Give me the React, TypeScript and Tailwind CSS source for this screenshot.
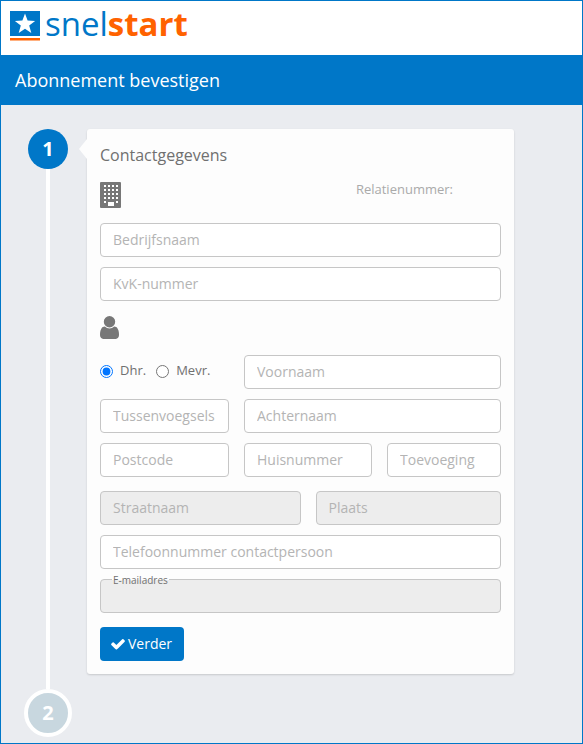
import type { InputHTMLAttributes } from "react";

type FieldProps = InputHTMLAttributes<HTMLInputElement> & { label: string };

function Field({ label, ...rest }: FieldProps) {
  return (
    <input
      type="text"
      aria-label={label}
      placeholder={label}
      className="block h-[34px] w-full min-w-0 rounded-[4px] border border-[#c6c6c6] bg-white px-3 pb-[2px] text-sm text-[#555] placeholder:text-[#b4b4b4] disabled:bg-[#ededed]"
      {...rest}
    />
  );
}

function Logo() {
  return (
    <a href="#" aria-label="snelstart" className="flex items-start gap-[5px]">
      <svg className="mt-[10px] h-[30px] w-[30px]" viewBox="0 0 30 30" aria-hidden="true">
        <rect width="30" height="25" fill="#0077c8" />
        <rect y="27" width="30" height="2.5" fill="#ff6200" />
        <path
          fill="#fff"
          d="M15 2.6l2.6 7 7.5.3-5.9 4.7 2.1 7.4-6.3-4.2L8.700 22l2.100-7.400L4.900 9.900l7.500-.3z"
        />
      </svg>
      <span className="text-[33px] leading-[46px] text-[#0077c8]">
        snel<span className="font-bold text-[#ff6200]">start</span>
      </span>
    </a>
  );
}

function BuildingIcon() {
  const columns = [4, 8, 12, 16];
  const rows = [3, 7, 11, 15];
  return (
    <svg className="h-[26px] w-[21px]" viewBox="0 0 21 26" aria-hidden="true">
      <rect width="21" height="26" rx="1" fill="#777" />
      <g fill="#fff">
        {rows.map((y) => columns.map((x) => <rect key={`${x}-${y}`} x={x} y={y} width="2" height="2" />))}
        <rect x="4" y="19" width="2" height="2" />
        <rect x="16" y="19" width="2" height="2" />
        <rect x="8" y="20" width="6" height="4" />
      </g>
    </svg>
  );
}

function UserIcon() {
  return (
    <svg className="h-[23px] w-[19px]" viewBox="0 128 1280 1536" fill="#777" aria-hidden="true">
      <path d="M1280 1399q0 109-62.5 187t-150.5 78h-854q-88 0-150.5-78t-62.5-187q0-85 8.5-160.5t31.5-152 58.5-131 94-89 134.5-34.5q131 128 313 128t313-128q76 0 134.5 34.5t94 89 58.5 131 31.5 152 8.5 160.5zm-256-887q0 159-112.5 271.5t-271.5 112.5-271.5-112.5-112.5-271.5 112.5-271.5 271.5-112.5 271.5 112.5 112.5 271.5z" />
    </svg>
  );
}

function CheckIcon() {
  return (
    <svg className="h-4 w-4" viewBox="0 0 1792 1792" fill="currentColor" aria-hidden="true">
      <path d="M1671 566q0 40-28 68l-724 724-136 136q-28 28-68 28t-68-28l-136-136-362-362q-28-28-28-68t28-68l136-136q28-28 68-28t68 28l294 295 656-657q28-28 68-28t68 28l136 136q28 28 28 68z" />
    </svg>
  );
}

export default function App() {
  return (
    <div className="flex min-h-screen flex-col border border-[#0077c8] bg-[#eaecf0] font-['Open_Sans','Noto_Sans',sans-serif] text-[#707070]">
      <header className="h-[54px] bg-white px-[9px]">
        <Logo />
      </header>
      <div className="flex h-[50px] items-center bg-[#0077c8] px-[14px]">
        <h1 className="text-lg leading-6 text-white">Abonnement bevestigen</h1>
      </div>
      <main className="flex flex-1 px-[23px] pt-6 pb-[6px]">
        <ol className="flex w-12 flex-col items-center font-bold text-white">
          <li className="flex h-10 w-10 items-center justify-center rounded-full bg-[#0077c8] text-xl">1</li>
          <li aria-hidden="true" className="w-1 flex-1 bg-white" />
          <li className="flex h-12 w-12 items-center justify-center rounded-full border-4 border-white bg-[#c8d7df] text-xl">
            2
          </li>
        </ol>
        <form
          className="relative mr-[45px] ml-[15px] flex-1 self-start rounded-[3px] bg-[#fdfdfd] px-[13px] pt-[14px] pb-[13px] shadow-[0_1px_2px_rgba(0,0,0,0.15)]"
          onSubmit={(event) => event.preventDefault()}
        >
          <span
            aria-hidden="true"
            className="absolute top-[10px] -left-2 border-y-[10px] border-r-8 border-y-transparent border-r-[#fdfdfd]"
          />
          <h2 className="text-base leading-6">Contactgegevens</h2>
          <div className="mt-[15px] flex justify-between">
            <BuildingIcon />
            <p className="mr-12 text-[13px] leading-[14px] text-[#aaa]">Relatienummer:</p>
          </div>
          <div className="mt-[15px] grid gap-[10px]">
            <Field label="Bedrijfsnaam" />
            <Field label="KvK-nummer" />
          </div>
          <div className="mt-[15px]">
            <UserIcon />
          </div>
          <div className="mt-4 grid grid-cols-[129fr_128fr_114fr] gap-x-[15px] gap-y-[10px]">
            <div className="flex items-center gap-[10px] pb-[2px] text-[13px]">
              <label className="flex items-center gap-[7px]">
                <input type="radio" name="aanhef" defaultChecked className="h-[13px] w-[13px]" />
                Dhr.
              </label>
              <label className="flex items-center gap-[7px]">
                <input type="radio" name="aanhef" className="h-[13px] w-[13px]" />
                Mevr.
              </label>
            </div>
            <div className="col-span-2">
              <Field label="Voornaam" />
            </div>
            <Field label="Tussenvoegsels" />
            <div className="col-span-2">
              <Field label="Achternaam" />
            </div>
            <Field label="Postcode" />
            <Field label="Huisnummer" />
            <Field label="Toevoeging" />
          </div>
          <div className="mt-[14px] grid grid-cols-[200fr_185fr] gap-x-[15px] gap-y-[10px]">
            <Field label="Straatnaam" disabled />
            <Field label="Plaats" disabled />
            <div className="col-span-2">
              <Field label="Telefoonnummer contactpersoon" />
            </div>
            <div className="relative col-span-2">
              <Field id="email" type="email" label="E-mailadres" placeholder="" disabled />
              <label
                htmlFor="email"
                className="absolute -top-[6px] left-3 bg-linear-to-b from-[#fdfdfd] from-50% to-[#ededed] to-50% px-px text-[10px] leading-[14px]"
              >
                E-mailadres
              </label>
            </div>
          </div>
          <button
            type="submit"
            className="mt-[14px] flex h-[34px] items-center gap-[2px] rounded-[4px] bg-[#0077c8] pr-3 pl-[10px] text-sm text-white"
          >
            <CheckIcon />
            Verder
          </button>
        </form>
      </main>
    </div>
  );
}
